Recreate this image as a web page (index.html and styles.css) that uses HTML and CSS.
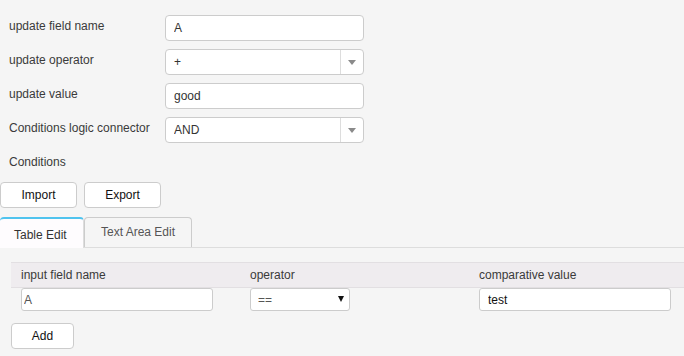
FILE: index.html
```html
<!DOCTYPE html>
<html lang="en">
<head>
  <meta charset="UTF-8">
  <meta name="viewport" content="width=device-width, initial-scale=1.0">
  <title>Update rule</title>
  <link rel="stylesheet" href="styles.css">
</head>
<body>
  <div class="form">
    <label for="field-name">update field name</label>
    <input type="text" id="field-name" class="control" value="A" />

    <label for="operator">update operator</label>
    <div class="select-wrap">
      <select id="operator" class="control">
        <option>+</option>
        <option>-</option>
      </select>
      <span class="select-arrow"><svg width="8" height="5" viewBox="0 0 8 5"><path d="M0 0H8L4 5Z" fill="#8a8a8a"/></svg></span>
    </div>

    <label for="update-value">update value</label>
    <input type="text" id="update-value" class="control" value="good" />

    <label for="connector">Conditions logic connector</label>
    <div class="select-wrap">
      <select id="connector" class="control">
        <option>AND</option>
        <option>OR</option>
      </select>
      <span class="select-arrow"><svg width="8" height="5" viewBox="0 0 8 5"><path d="M0 0H8L4 5Z" fill="#8a8a8a"/></svg></span>
    </div>
  </div>

  <p class="section-title">Conditions</p>

  <div class="toolbar">
    <button>Import</button>
    <button>Export</button>
  </div>

  <div class="tabs">
    <div class="tab active">Table Edit</div>
    <div class="tab">Text Area Edit</div>
  </div>

  <div class="tab-panel">
    <table class="conditions">
      <thead>
        <tr>
          <th class="col-name">input field name</th>
          <th class="col-op">operator</th>
          <th>comparative value</th>
        </tr>
      </thead>
      <tbody>
        <tr>
          <td><input type="text" class="cell-input name-input" value="A" /></td>
          <td>
            <div class="cell-select">
              <select>
                <option>==</option>
                <option>!=</option>
              </select>
              <span class="cell-arrow"><svg width="6" height="6" viewBox="0 0 6 6"><path d="M0 0H6L3 6Z" fill="#111"/></svg></span>
            </div>
          </td>
          <td><input type="text" class="cell-input value-input" value="test" /></td>
        </tr>
      </tbody>
    </table>
    <button class="add-btn">Add</button>
  </div>
</body>
</html>
```

FILE: styles.css
```css
body {
  margin: 0;
  background: #f5f5f5;
  font-family: "Liberation Sans", Arial, sans-serif;
  font-size: 12px;
  color: #3a3a3a;
  overflow: hidden;
}
.form {
  display: grid;
  grid-template-columns: 156px 199px;
  row-gap: 8px;
  align-items: center;
  padding: 15px 0 0 9px;
}
label {
  line-height: 14px;
  margin-top: -5px;
}
.control {
  box-sizing: border-box;
  width: 199px;
  height: 26px;
  margin: 0;
  padding: 0 8px;
  border: 1px solid #ccc;
  border-radius: 4px;
  background: #fff;
  font-family: inherit;
  font-size: 12px;
  color: #333;
}
select.control {
  appearance: none;
  -webkit-appearance: none;
  outline: none;
}
.select-wrap {
  position: relative;
  height: 26px;
}
.select-arrow {
  position: absolute;
  top: 1px;
  right: 1px;
  bottom: 1px;
  width: 22px;
  border-left: 1px solid #ddd;
  display: flex;
  align-items: center;
  justify-content: center;
  pointer-events: none;
}
.section-title {
  margin: 12px 0 0 9px;
  line-height: 14px;
}
.toolbar {
  display: flex;
  gap: 7px;
  margin-top: 13px;
}
button {
  box-sizing: border-box;
  width: 77px;
  height: 26px;
  padding: 0;
  border: 1px solid #ccc;
  border-radius: 4px;
  background: #fff;
  font-family: inherit;
  font-size: 12px;
  color: #111;
  cursor: pointer;
}
.tabs {
  display: flex;
  align-items: flex-end;
  margin-top: 9px;
  border-bottom: 1px solid #ddd;
  height: 30px;
}
.tab {
  box-sizing: border-box;
  height: 30px;
  padding: 0 16px;
  border: 1px solid #ccc;
  border-bottom: none;
  border-radius: 4px 4px 0 0;
  line-height: 28px;
  color: #555;
}
.tab.active {
  width: 84px;
  height: 31px;
  margin-bottom: -1px;
  border: none;
  border-right: 1px solid #ddd;
  border-top: 2px solid #4fc3ee;
  background: #fefcfe;
  color: #333;
  line-height: 32px;
  padding: 0 0 0 14px;
}
.tab-panel {
  padding: 14px 0 0 11px;
}
.conditions {
  border-collapse: collapse;
  width: 700px;
}
.conditions th {
  height: 24px;
  padding: 0 10px;
  text-align: left;
  font-weight: normal;
  background: #efecef;
  border-top: 1px solid #e2dfe2;
  border-bottom: 1px solid #e2dfe2;
}
.col-name,
.col-op {
  width: 209px;
}
.conditions td {
  padding: 0 10px 2px;
  height: 25px;
  vertical-align: top;
}
.cell-input {
  box-sizing: border-box;
  width: 192px;
  height: 23px;
  margin: 0;
  border: 1px solid #ccc;
  border-radius: 3px;
  background: #fff;
  font-family: inherit;
  font-size: 12px;
  color: #333;
}
.name-input {
  padding: 0 2px;
  color: #555;
}
.value-input {
  padding: 0 8px;
  color: #111;
}
.cell-select {
  position: relative;
  width: 100px;
}
.cell-select select {
  box-sizing: border-box;
  width: 100px;
  height: 23px;
  margin: 0;
  padding: 0 7px;
  border: 1px solid #ccc;
  border-radius: 3px;
  background: #fff;
  font-family: inherit;
  font-size: 12px;
  color: #555;
  appearance: none;
  -webkit-appearance: none;
}
.cell-arrow {
  position: absolute;
  top: 8px;
  right: 6px;
  line-height: 0;
  pointer-events: none;
}
.add-btn {
  width: 63px;
  height: 26px;
  margin-top: 8px;
}
```
